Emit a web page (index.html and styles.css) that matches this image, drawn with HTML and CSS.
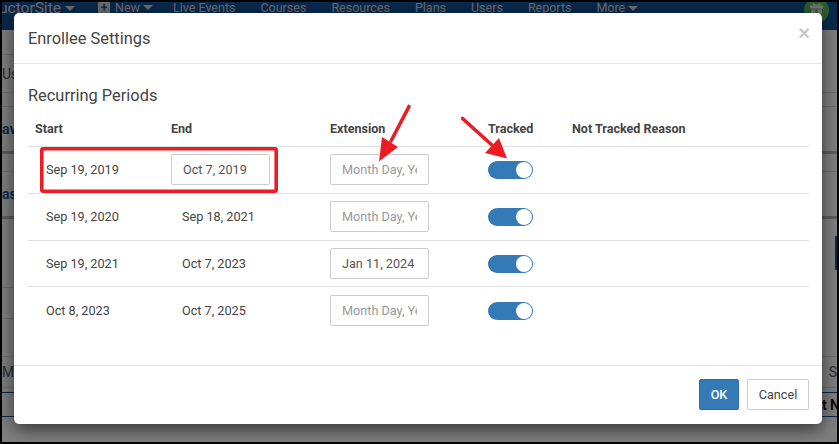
FILE: index.html
```html
<!DOCTYPE html>
<html lang="en">
<head>
<meta charset="utf-8">
<title>Enrollee Settings</title>
<link rel="stylesheet" href="styles.css">
</head>
<body>
<div class="frame">
  <nav class="nav">
    <span class="brand">uctorSite<i class="caret"></i></span>
    <span class="nav-item nav-new"><i class="plus">+</i>New<i class="caret"></i></span>
    <span class="nav-item">Live Events</span>
    <span class="nav-item">Courses</span>
    <span class="nav-item">Resources</span>
    <span class="nav-item">Plans</span>
    <span class="nav-item">Users</span>
    <span class="nav-item">Reports</span>
    <span class="nav-item">More<i class="caret"></i></span>
  </nav>
  <div class="avatar">
    <svg width="13" height="11" viewBox="0 0 13 11"><path fill="#e4e4e4" d="M0 2.5h13v3H0zM1 6.5h4.5V11H1zM7.500 6.500H12V11H7.500zM3 0l3.500 2L10 0l.8 1.500-2 1H4.200l-2-1z"/></svg>
  </div>
  <main class="page">
    <div class="bg-row r1"><i class="stub"></i></div>
    <div class="bg-row r2"><span>Us</span></div>
    <div class="bg-row r3"></div>
    <div class="bg-row r4 link"><span>av</span></div>
    <div class="bg-row r5"></div>
    <div class="bg-row r6 link"><span>as</span></div>
    <div class="bg-row r7"><b class="bg-btn"></b><i class="stub"></i></div>
    <div class="bg-row r8"><i class="stub"></i></div>
    <div class="bg-row r9"></div>
    <div class="bg-row r10"><span>Mo</span><span>S</span></div>
    <div class="bg-row r11"></div>
    <div class="bg-row r12 strong"><span></span><span class="bleed">st N</span></div>
  </main>
  <div class="backdrop"></div>
  <section class="modal">
    <header class="modal-header">
      <h4 class="modal-title">Enrollee Settings</h4>
      <span class="close">×</span>
    </header>
    <div class="modal-body">
      <h4 class="section-title">Recurring Periods</h4>
      <table class="periods">
        <colgroup>
          <col class="c-start"><col class="c-end"><col class="c-ext"><col class="c-track"><col>
        </colgroup>
        <thead>
          <tr><th>Start</th><th>End</th><th>Extension</th><th>Tracked</th><th>Not Tracked Reason</th></tr>
        </thead>
        <tbody>
          <tr>
            <td class="date">Sep 19, 2019</td>
            <td><input class="field" type="text" value="Oct 7, 2019"></td>
            <td><input class="field" type="text" placeholder="Month Day, Year"></td>
            <td><span class="toggle"><i></i></span></td>
            <td></td>
          </tr>
          <tr>
            <td class="date">Sep 19, 2020</td>
            <td class="date">Sep 18, 2021</td>
            <td><input class="field" type="text" placeholder="Month Day, Year"></td>
            <td><span class="toggle"><i></i></span></td>
            <td></td>
          </tr>
          <tr>
            <td class="date">Sep 19, 2021</td>
            <td class="date">Oct 7, 2023</td>
            <td><input class="field" type="text" value="Jan 11, 2024"></td>
            <td><span class="toggle"><i></i></span></td>
            <td></td>
          </tr>
          <tr>
            <td class="date">Oct 8, 2023</td>
            <td class="date">Oct 7, 2025</td>
            <td><input class="field" type="text" placeholder="Month Day, Year"></td>
            <td><span class="toggle"><i></i></span></td>
            <td></td>
          </tr>
        </tbody>
      </table>
    </div>
    <footer class="modal-footer">
      <button class="btn btn-primary">OK</button>
      <button class="btn btn-cancel">Cancel</button>
    </footer>
  </section>
  <svg class="marks" width="839" height="444" viewBox="0 0 839 444">
    <rect x="41.800" y="148.800" width="234.400" height="42.400" rx="1.500" fill="none" stroke="#ed1c24" stroke-width="3.600"/>
    <path d="M409 106.500L391 141" fill="none" stroke="#ed1c24" stroke-width="3.600" stroke-linecap="round"/>
    <path fill="#ed1c24" d="M379 161.500L382 137L398 147z"/>
    <path d="M462.500 118.500L493 146" fill="none" stroke="#ed1c24" stroke-width="3.600" stroke-linecap="round"/>
    <path fill="#ed1c24" d="M507 158.500L485 153L499 138z"/>
  </svg>
</div>
</body>
</html>
```
FILE: styles.css
```css
* { box-sizing: border-box; }
html, body { margin: 0; padding: 0; }
body { font-family: Roboto, "Liberation Sans", sans-serif; font-size: 12.67px; color: #444; }

.frame {
  position: relative;
  width: 839px;
  height: 444px;
  border: 2px solid #000;
  overflow: hidden;
  background: #fff;
}

.nav {
  display: flex;
  align-items: center;
  height: 28px;
  background: #14539c;
  color: #dcdcdc;
  font-size: 12.5px;
  line-height: 10px;
  padding-bottom: 17px;
  white-space: nowrap;
}
.brand { font-size: 15.5px; width: 99px; margin-left: -3px; flex: none; }
.nav-item { margin-right: 25px; }
.nav-new { display: inline-flex; align-items: center; margin-right: 20px; }
.plus {
  display: inline-block;
  width: 12px;
  height: 12px;
  margin-right: 5px;
  background: #d8d8d8;
  color: #14539c;
  font-style: normal;
  font-weight: 700;
  font-size: 12px;
  line-height: 12px;
  text-align: center;
}
.caret {
  display: inline-block;
  width: 0;
  height: 0;
  margin-left: 3px;
  vertical-align: middle;
  border-top: 5px solid #dcdcdc;
  border-left: 5px solid transparent;
  border-right: 5px solid transparent;
}
.brand .caret { margin-left: 4px; }

.avatar {
  position: absolute;
  left: 802px;
  top: -4px;
  width: 25px;
  height: 25px;
  border-radius: 50%;
  background: #5cb85c;
  display: flex;
  justify-content: center;
  padding-top: 5px;
}

.page { background: #fff; color: #555; font-size: 14px; }
.bg-row {
  position: relative;
  display: flex;
  justify-content: space-between;
  align-items: center;
  border-bottom: 1px solid #ddd;
  overflow: hidden;
}
.bg-row.link { color: #14539c; font-weight: 700; }
.bg-row.strong { color: #111; font-weight: 700; }
.r1, .r7, .r8 { border-bottom: 0; align-items: flex-end; }
.stub { display: block; width: 100px; border-bottom: 1px solid #ddd; }
.r1 { height: 25px; }
.r2 { height: 38px; }
.r3 { height: 14px; }
.r4 { height: 47px; border-bottom: 3px solid #bbb; }
.r5 { height: 18px; }
.r6 { height: 47px; border-bottom: 3px solid #bbb; }
.r7 { height: 69px; }
.r8 { height: 31px; }
.r9 { height: 38px; }
.r10 { height: 31px; }
.r11 { height: 5px; border-bottom: 1px solid #14539c; }
.r12 { height: 24px; border-bottom: 1px solid #14539c; }
.bleed { margin-right: -3px; }
.bg-btn { position: absolute; right: 0; top: 17px; width: 2px; height: 34px; background: #14539c; }

.backdrop {
  position: absolute;
  inset: 0;
  background: rgba(0, 0, 0, .5);
}

.modal {
  position: absolute;
  left: 12px;
  top: 11px;
  width: 808px;
  height: 411px;
  display: flex;
  flex-direction: column;
  background: #fff;
  border-radius: 5px;
  box-shadow: 0 5px 18px rgba(0, 0, 0, .6);
}
.modal-header {
  height: 51px;
  flex: none;
  display: flex;
  justify-content: space-between;
  padding: 16px 14px 0;
  border-bottom: 1px solid #e5e5e5;
}
.modal-title, .section-title {
  margin: 0;
  font-size: 16.4px;
  font-weight: 400;
  line-height: 20px;
  color: #444;
}
.close {
  color: #c8c8c8;
  font: 700 20px/18px "Liberation Sans", sans-serif;
  margin-top: -5px;
  margin-right: -2px;
}
.modal-body { flex: 1; padding: 22px 13px 0 14px; }
.section-title { height: 25px; }
.periods {
  width: 781px;
  table-layout: fixed;
  border-collapse: collapse;
}
.c-start { width: 136px; }
.c-end { width: 159px; }
.c-ext { width: 158px; }
.c-track { width: 84px; }
.periods th {
  height: 35px;
  padding: 0 0 0 7px;
  text-align: left;
  font-weight: 700;
  font-size: 12.55px;
  border-bottom: 1px solid #e0e0e0;
  color: #444;
}
.periods td {
  height: 46.67px;
  padding: 0 0 0 7px;
  border-bottom: 1px solid #e0e0e0;
  vertical-align: middle;
}
.periods tbody tr:first-child td { height: 47.4px; }
.periods tr:last-child td { border-bottom: 0; }
.periods td.date { padding-left: 18px; }
.field {
  display: block;
  width: 99px;
  height: 31px;
  padding: 0 11px;
  border: 1px solid #ccc;
  border-radius: 2px;
  font: inherit;
  color: #555;
  background: #fff;
}
.field::placeholder { color: #999; opacity: 1; }
.toggle {
  display: block;
  position: relative;
  width: 45px;
  height: 18px;
  margin-top: 1px;
  border-radius: 9px;
  background: #337ab7;
}
.toggle i {
  position: absolute;
  right: 1px;
  top: 1px;
  width: 16px;
  height: 16px;
  border-radius: 50%;
  background: #fff;
}
.modal-footer {
  height: 59px;
  flex: none;
  display: flex;
  justify-content: flex-end;
  gap: 8px;
  padding: 13px 13px 0 0;
  border-top: 1px solid #e5e5e5;
}
.btn {
  height: 31px;
  padding: 0;
  font: inherit;
  color: #444;
  background: #fff;
  border: 1px solid #ccc;
  border-radius: 2px;
}
.btn-cancel { width: 62px; }
.btn-primary {
  width: 40px;
  font-weight: 500;
  color: #fff;
  background: #337ab7;
  border-color: #2e6da4;
}
.marks { position: absolute; left: -2px; top: -2px; }
```
